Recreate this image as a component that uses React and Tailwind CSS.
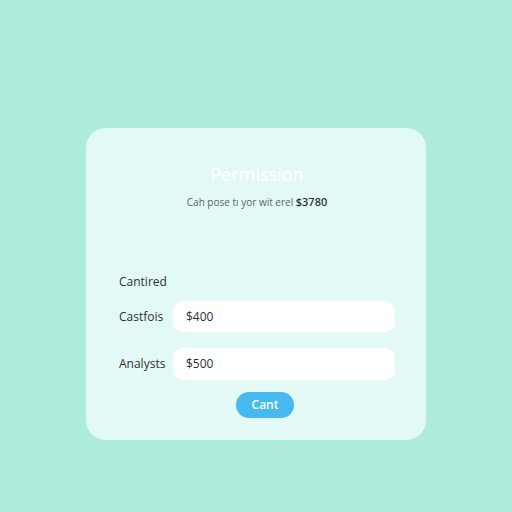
export default function App() {
  return (
    <div
      className="w-[512px] h-[512px] bg-[#aeecdc] flex items-start justify-center pt-[128px]"
      style={{ fontFamily: '"Open Sans", "Liberation Sans", sans-serif' }}
    >
      <div className="w-[340px] h-[312px] rounded-[20px] bg-[#e3f9f5] flex flex-col pl-[33px] pr-[31px]">
        <h1 className="mt-[35px] text-center text-[18px] leading-[22px] text-white font-normal">Permission</h1>
        <p className="mt-[10px] text-center text-[10px] leading-[14px] text-[#5b6466]">
          Cah pose tı yor wit erel <span className="text-[#2e3436] font-semibold text-[11px]">$3780</span>
        </p>
        <div className="mt-[65px] text-[12px] leading-[16px] text-[#2b3133]">Cantired</div>
        <div className="mt-[11px] flex items-center">
          <span className="w-[54px] text-[12px] text-[#2b3133]">Castfois</span>
          <div className="flex-1 h-[31px] rounded-[10px] bg-white flex items-center pl-[13px] text-[12px] text-[#2b3133]">$400</div>
        </div>
        <div className="mt-[16px] flex items-center">
          <span className="w-[54px] text-[12px] text-[#2b3133]">Analysts</span>
          <div className="flex-1 h-[32px] rounded-[10px] bg-white flex items-center pl-[13px] text-[12px] text-[#2b3133]">$500</div>
        </div>
        <div className="mt-[12px] flex justify-center pl-[16px]">
          <button className="w-[58px] h-[26px] rounded-full bg-[#46b9f0] text-white text-[12px] font-semibold">Cant</button>
        </div>
      </div>
    </div>
  );
}
